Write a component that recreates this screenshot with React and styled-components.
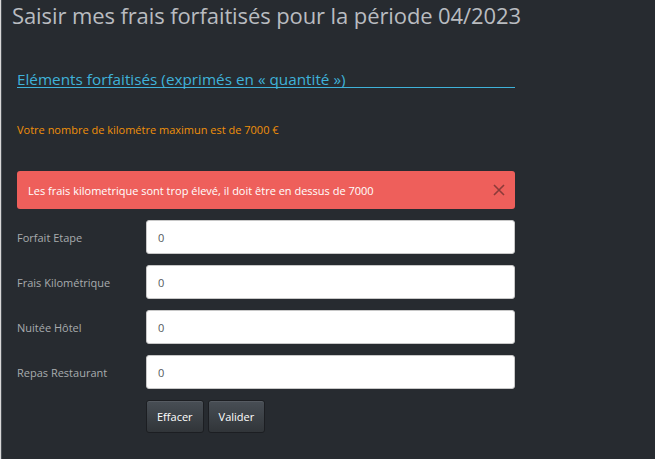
import React from "react";
import styled, { createGlobalStyle } from "styled-components";

const Global = createGlobalStyle`
  html, body { margin: 0; padding: 0; background: #272b30; }
  body { font-family: "Open Sans", "Noto Sans", sans-serif; color: #c8c8c8; }
  * { box-sizing: border-box; }
`;

const Page = styled.div`
  min-height: 459px;
  background: #272b30;
  border-left: 1px solid #d8d8d8;
  box-shadow: inset 1px 0 0 #4a4f55;
  padding: 0 0 0 16px;
`;

const Title = styled.h2`
  margin: 0;
  margin-left: -5px;
  font-weight: 400;
  font-size: 22px;
  letter-spacing: -0.1px;
  line-height: 30px;
  color: #b9bcc0;
`;

const Content = styled.div`
  width: 498px;
`;

const Legend = styled.div`
  margin-top: 41px;
  font-size: 15.3px;
  line-height: 16px;
  height: 17px;
  color: #3fb2d9;
  border-bottom: 1px solid #3fb2d9;
`;

const Warning = styled.p`
  margin: 34px 0 0;
  font-size: 11px;
  line-height: 16px;
  color: #f0900a;
`;

const Alert = styled.div`
  margin-top: 33px;
  height: 38px;
  background: #ee5f5b;
  border-radius: 3px;
  display: flex;
  align-items: center;
  justify-content: space-between;
  padding: 0 10px 0 11px;
  color: #fff;
  font-size: 11px;
`;

const Close = styled.svg`
  width: 12px;
  height: 12px;
  display: block;
`;

const Form = styled.div`
  margin-top: 11px;
  display: flex;
  flex-direction: column;
  gap: 11px;
`;

const Row = styled.div`
  display: grid;
  grid-template-columns: 129px 1fr;
  align-items: center;
`;

const Label = styled.label`
  font-size: 11px;
  color: #a8abae;
`;

const Input = styled.div`
  height: 34px;
  background: #fff;
  border-radius: 3px;
  border: 1px solid #c8c8c8;
  display: flex;
  align-items: center;
  padding-left: 11px;
  font-size: 11px;
  color: #52575c;
`;

const Actions = styled.div`
  margin-top: 11px;
  margin-left: 129px;
  display: flex;
  gap: 4px;
`;

const Button = styled.button`
  height: 33px;
  padding: 0 ${(p) => p.$px}px;
  border: 1px solid #1c1e22;
  border-radius: 3px;
  background: linear-gradient(#484e55, #3a3f44 60%, #313539);
  color: #fff;
  font-family: inherit;
  font-size: 11px;
  box-shadow: inset 0 1px 0 rgba(255,255,255,0.08);
`;

const fields = ["Forfait Etape", "Frais Kilométrique", "Nuitée Hôtel", "Repas Restaurant"];

export default function App() {
  return (
    <>
      <Global />
      <Page>
        <Title>Saisir mes frais forfaitisés pour la période 04/2023</Title>
        <Content>
          <Legend>Eléments forfaitisés (exprimés en « quantité »)</Legend>
          <Warning>Votre nombre de kilométre maximun est de 7000 €</Warning>
          <Alert>
            <span>Les frais kilometrique sont trop élevé, il doit être en dessus de 7000</span>
            <Close viewBox="0 0 12 12">
              <path d="M1 1 L11 11 M11 1 L1 11" stroke="#8b3b39" strokeWidth="1.6" fill="none" />
            </Close>
          </Alert>
          <Form>
            {fields.map((f) => (
              <Row key={f}>
                <Label>{f}</Label>
                <Input>0</Input>
              </Row>
            ))}
          </Form>
          <Actions>
            <Button $px={10}>Effacer</Button>
            <Button $px={10}>Valider</Button>
          </Actions>
        </Content>
      </Page>
    </>
  );
}
